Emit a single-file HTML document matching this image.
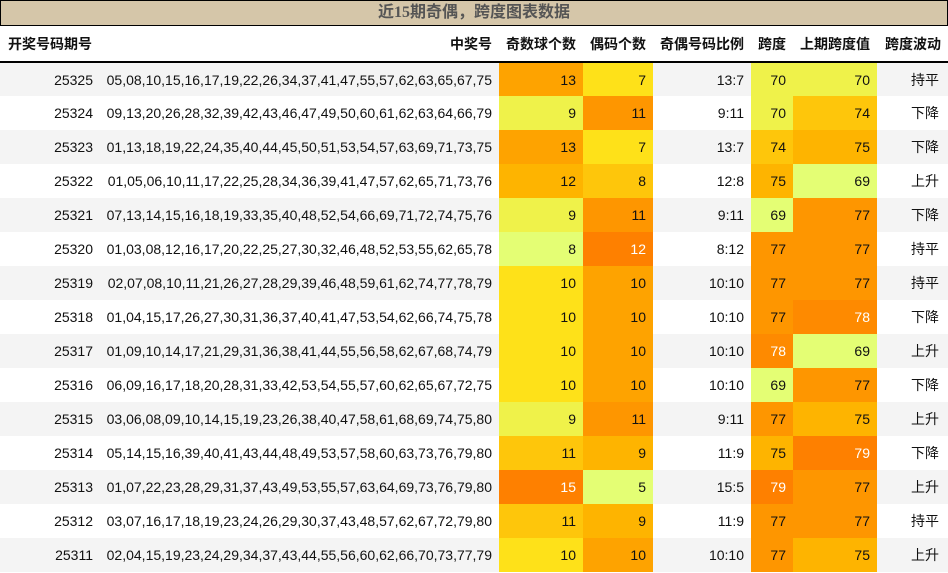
<!DOCTYPE html>
<html><head><meta charset="utf-8"><style>
*{margin:0;padding:0;box-sizing:border-box}
body{width:948px;height:573px;overflow:hidden;background:#fff;font-family:"Liberation Sans","Noto Sans CJK SC",sans-serif;color:#111;font-size:14px}
.title{height:26px;background:#d5c6a9;border:1px solid #000;text-align:center;font:bold 16px/24px "Liberation Serif","Noto Sans CJK SC",serif;color:#555}
table{border-collapse:collapse;table-layout:fixed;width:948px}
th{height:36px;font-weight:bold;font-size:14px;text-align:right;padding:0 7px 0 0;border-bottom:2px solid #000;white-space:nowrap}
th.l{text-align:left;padding-left:8px}
td{height:34px;text-align:right;padding:0 7px 0 0;white-space:nowrap}
tr:nth-child(odd) td{background:#f4f4f4}
tr td.g{background:#e4fe74}
tr td.y2{background:#eff24a}
tr td.y{background:#fee119}
tr td.a{background:#fec60b}
tr td.b{background:#feb400}
tr td.c{background:#fea300}
tr td.d{background:#fe9600}
tr td.e{background:#fe8a00;color:#fff}
tr td.f{background:#fe8000;color:#fff}
td.w{padding-right:9px}
</style></head><body>
<div class="title">近15期奇偶，跨度图表数据</div>
<table>
<colgroup><col style="width:100px"><col style="width:399px"><col style="width:84px"><col style="width:70px"><col style="width:98px"><col style="width:42px"><col style="width:84px"><col style="width:71px"></colgroup>
<thead><tr><th class="l">开奖号码期号</th><th>中奖号</th><th>奇数球个数</th><th>偶码个数</th><th>奇偶号码比例</th><th>跨度</th><th>上期跨度值</th><th>跨度波动</th></tr></thead>
<tbody>
<tr><td>25325</td><td>05,08,10,15,16,17,19,22,26,34,37,41,47,55,57,62,63,65,67,75</td><td class="c">13</td><td class="y">7</td><td>13:7</td><td class="y2">70</td><td class="y2">70</td><td class="w">持平</td></tr>
<tr><td>25324</td><td>09,13,20,26,28,32,39,42,43,46,47,49,50,60,61,62,63,64,66,79</td><td class="y2">9</td><td class="d">11</td><td>9:11</td><td class="y2">70</td><td class="a">74</td><td class="w">下降</td></tr>
<tr><td>25323</td><td>01,13,18,19,22,24,35,40,44,45,50,51,53,54,57,63,69,71,73,75</td><td class="c">13</td><td class="y">7</td><td>13:7</td><td class="a">74</td><td class="b">75</td><td class="w">下降</td></tr>
<tr><td>25322</td><td>01,05,06,10,11,17,22,25,28,34,36,39,41,47,57,62,65,71,73,76</td><td class="b">12</td><td class="a">8</td><td>12:8</td><td class="b">75</td><td class="g">69</td><td class="w">上升</td></tr>
<tr><td>25321</td><td>07,13,14,15,16,18,19,33,35,40,48,52,54,66,69,71,72,74,75,76</td><td class="y2">9</td><td class="d">11</td><td>9:11</td><td class="g">69</td><td class="d">77</td><td class="w">下降</td></tr>
<tr><td>25320</td><td>01,03,08,12,16,17,20,22,25,27,30,32,46,48,52,53,55,62,65,78</td><td class="g">8</td><td class="f">12</td><td>8:12</td><td class="d">77</td><td class="d">77</td><td class="w">持平</td></tr>
<tr><td>25319</td><td>02,07,08,10,11,21,26,27,28,29,39,46,48,59,61,62,74,77,78,79</td><td class="y">10</td><td class="c">10</td><td>10:10</td><td class="d">77</td><td class="d">77</td><td class="w">持平</td></tr>
<tr><td>25318</td><td>01,04,15,17,26,27,30,31,36,37,40,41,47,53,54,62,66,74,75,78</td><td class="y">10</td><td class="c">10</td><td>10:10</td><td class="d">77</td><td class="e">78</td><td class="w">下降</td></tr>
<tr><td>25317</td><td>01,09,10,14,17,21,29,31,36,38,41,44,55,56,58,62,67,68,74,79</td><td class="y">10</td><td class="c">10</td><td>10:10</td><td class="e">78</td><td class="g">69</td><td class="w">上升</td></tr>
<tr><td>25316</td><td>06,09,16,17,18,20,28,31,33,42,53,54,55,57,60,62,65,67,72,75</td><td class="y">10</td><td class="c">10</td><td>10:10</td><td class="g">69</td><td class="d">77</td><td class="w">下降</td></tr>
<tr><td>25315</td><td>03,06,08,09,10,14,15,19,23,26,38,40,47,58,61,68,69,74,75,80</td><td class="y2">9</td><td class="d">11</td><td>9:11</td><td class="d">77</td><td class="b">75</td><td class="w">上升</td></tr>
<tr><td>25314</td><td>05,14,15,16,39,40,41,43,44,48,49,53,57,58,60,63,73,76,79,80</td><td class="a">11</td><td class="b">9</td><td>11:9</td><td class="b">75</td><td class="f">79</td><td class="w">下降</td></tr>
<tr><td>25313</td><td>01,07,22,23,28,29,31,37,43,49,53,55,57,63,64,69,73,76,79,80</td><td class="f">15</td><td class="g">5</td><td>15:5</td><td class="f">79</td><td class="d">77</td><td class="w">上升</td></tr>
<tr><td>25312</td><td>03,07,16,17,18,19,23,24,26,29,30,37,43,48,57,62,67,72,79,80</td><td class="a">11</td><td class="b">9</td><td>11:9</td><td class="d">77</td><td class="d">77</td><td class="w">持平</td></tr>
<tr><td>25311</td><td>02,04,15,19,23,24,29,34,37,43,44,55,56,60,62,66,70,73,77,79</td><td class="y">10</td><td class="c">10</td><td>10:10</td><td class="d">77</td><td class="b">75</td><td class="w">上升</td></tr>
</tbody></table>
</body></html>
